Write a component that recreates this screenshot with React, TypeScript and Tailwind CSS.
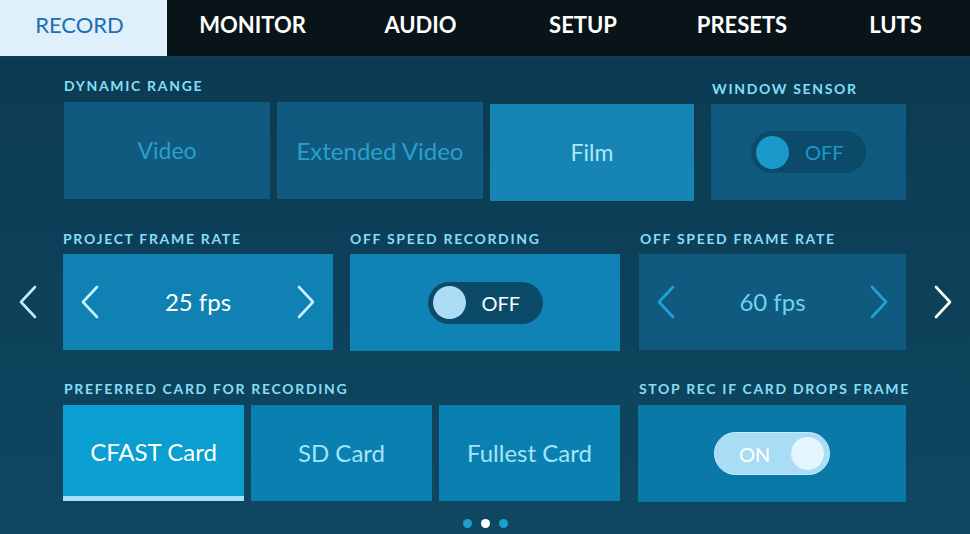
import React from 'react';

const font = { fontFamily: 'Lato, "Open Sans", sans-serif' };

function Chevron({ dir, className }: { dir: 'left' | 'right'; className?: string }) {
  const d = dir === 'left' ? 'M17 2 L3 17 L17 32' : 'M3 2 L17 17 L3 32';
  return (
    <svg width="20" height="34" viewBox="0 0 20 34" className={className}>
      <path d={d} fill="none" stroke="currentColor" strokeWidth="2.6" strokeLinecap="round" strokeLinejoin="round" />
    </svg>
  );
}

function Label({ children, className = '' }: { children: React.ReactNode; className?: string }) {
  return (
    <div className={`text-[14px] font-bold tracking-[0.12em] whitespace-nowrap text-[#86def6] leading-none ${className}`}>
      {children}
    </div>
  );
}

function Toggle({ on, variant }: { on: boolean; variant: 'dim' | 'bright' | 'on' }) {
  if (on) {
    return (
      <div className="flex items-center justify-between w-[116px] h-[43px] rounded-full bg-[#a9dcf5] border border-[#c9ecfb] pl-[24px] pr-[5px]">
        <span className="text-[20px] text-white">ON</span>
        <span className="w-[33px] h-[33px] rounded-full bg-[#e4f5fd]" />
      </div>
    );
  }
  const knob = variant === 'dim' ? 'bg-[#1a9acb]' : 'bg-[#acdcf3]';
  const text = variant === 'dim' ? 'text-[#1a9acb]' : 'text-white';
  return (
    <div className="flex items-center w-[115px] h-[42px] rounded-full bg-[#0c4a6a] pl-[5px] gap-[16px]">
      <span className={`w-[33px] h-[33px] rounded-full ${knob}`} />
      <span className={`text-[20px] ${text}`}>OFF</span>
    </div>
  );
}

const tabs = [
  { name: 'MONITOR', w: 'w-[171px]' },
  { name: 'AUDIO', w: 'w-[165px]' },
  { name: 'SETUP', w: 'w-[160px]' },
  { name: 'PRESETS', w: 'w-[158px]' },
  { name: 'LUTS', w: 'w-[149px]' },
];

export default function App() {
  return (
    <div style={font} className="w-[970px] h-[534px] overflow-hidden flex flex-col bg-gradient-to-b from-[#0b3a51] to-[#0f4761]">
      {/* tab bar */}
      <div className="flex shrink-0 h-[58px] bg-[#081418] border-b-2 border-[#0d3f57]">
        <div className="w-[167px] flex items-center justify-center pr-2 pb-[7px] bg-[#dff0fb] text-[22px] text-[#1a6fb4]">
          RECORD
        </div>
        {tabs.map(t => (
          <div key={t.name} className={`${t.w} flex items-center justify-center pb-[7px] text-[22px] font-bold text-white`}>
            {t.name}
          </div>
        ))}
      </div>

      {/* row 1 */}
      <div className="flex shrink-0 pl-[64px] pt-[20px]">
        <div className="flex flex-col w-[630px]">
          <Label className="pt-[1px]">DYNAMIC RANGE</Label>
          <div className="flex gap-[7px] mt-[9px]">
            <div className="w-[206px] h-[97px] bg-[#0f5a7e] flex items-center justify-center text-[23px] text-[#2a9fcb]">Video</div>
            <div className="w-[206px] h-[97px] bg-[#0f5a7e] flex items-center justify-center text-[24px] text-[#2a9fcb]">Extended Video</div>
            <div className="w-[204px] h-[97px] mt-[2px] bg-[#1685b3] flex items-center justify-center text-[23px] text-[#aee7f8]">Film</div>
          </div>
        </div>
        <div className="flex flex-col w-[195px] ml-[17px]">
          <Label className="pt-[4px] pl-[1px]">WINDOW SENSOR</Label>
          <div className="h-[96px] mt-[8px] bg-[#0f5a7e] flex items-center justify-center">
            <Toggle on={false} variant="dim" />
          </div>
        </div>
      </div>

      {/* row 2 */}
      <div className="flex shrink-0 pt-[31px]">
        <div className="w-[63px] flex flex-col">
          <div className="h-[22px]" />
          <div className="h-[96px] flex items-center justify-center pr-[8px] text-[#bdeefb]">
            <Chevron dir="left" />
          </div>
        </div>
        <div className="flex flex-col w-[270px]">
          <Label>PROJECT FRAME RATE</Label>
          <div className="h-[96px] mt-[8px] bg-[#0f82b3] flex items-center justify-between px-[17px] text-white">
            <Chevron dir="left" className="text-[#c8f0fc]" />
            <span className="text-[24px]">25 fps</span>
            <Chevron dir="right" className="text-[#c8f0fc]" />
          </div>
        </div>
        <div className="flex flex-col w-[270px] ml-[17px]">
          <Label>OFF SPEED RECORDING</Label>
          <div className="h-[97px] mt-[8px] bg-[#0f83b5] flex items-center justify-center">
            <Toggle on={false} variant="bright" />
          </div>
        </div>
        <div className="flex flex-col w-[267px] ml-[19px]">
          <Label className="pl-[1px]">OFF SPEED FRAME RATE</Label>
          <div className="h-[96px] mt-[8px] bg-[#0f5a7e] flex items-center justify-between px-[17px]">
            <Chevron dir="left" className="text-[#1ea4d4]" />
            <span className="text-[24px] text-[#6fd2f1]">60 fps</span>
            <Chevron dir="right" className="text-[#1ea4d4]" />
          </div>
        </div>
        <div className="w-[64px] flex flex-col">
          <div className="h-[22px]" />
          <div className="h-[96px] flex items-center justify-center pl-[10px] text-white">
            <Chevron dir="right" />
          </div>
        </div>
      </div>

      {/* row 3 */}
      <div className="flex shrink-0 pl-[63px] pt-[31px]">
        <div className="flex flex-col w-[557px]">
          <Label className="pl-[1px]">PREFERRED CARD FOR RECORDING</Label>
          <div className="flex gap-[7px] mt-[9px]">
            <div className="w-[181px] h-[96px] bg-[#0a9fd0] flex flex-col">
              <div className="flex-1 flex items-center justify-center text-[24px] text-white pt-[2px]">CFAST Card</div>
              <div className="h-[5px] bg-[#a6e1f7]" />
            </div>
            <div className="w-[181px] h-[96px] bg-[#0a80b1] flex items-center justify-center text-[24px] text-[#a4e4f8]">SD Card</div>
            <div className="w-[181px] h-[96px] bg-[#0a80b1] flex items-center justify-center text-[24px] text-[#a4e4f8]">Fullest Card</div>
          </div>
        </div>
        <div className="flex flex-col w-[268px] ml-[18px]">
          <Label className="pl-[1px] tracking-[0.11em]">STOP REC IF CARD DROPS FRAME</Label>
          <div className="h-[97px] mt-[9px] bg-[#0b79a8] flex items-center justify-center">
            <Toggle on variant="on" />
          </div>
        </div>
      </div>

      {/* page dots */}
      <div className="flex shrink-0 justify-center gap-[9px] pt-[17px] pl-[1px]">
        <span className="w-[9px] h-[9px] rounded-full bg-[#1a9fd0]" />
        <span className="w-[9px] h-[9px] rounded-full bg-white" />
        <span className="w-[9px] h-[9px] rounded-full bg-[#1a9fd0]" />
      </div>
    </div>
  );
}
